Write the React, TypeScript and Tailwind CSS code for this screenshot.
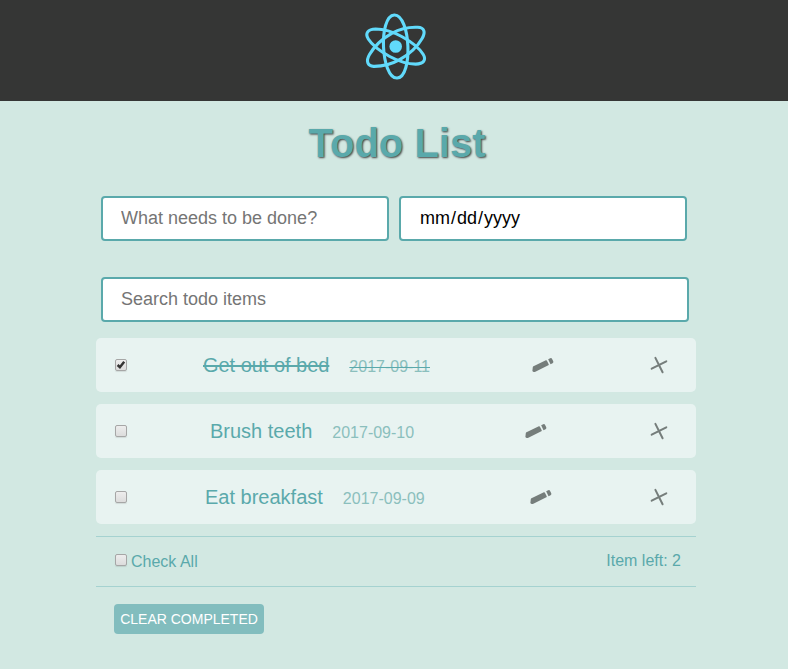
import React from "react";

function ReactLogo() {
  return (
    <svg className="block h-[68px] w-[68px]" viewBox="-33.7 -34.5 68 68" fill="none" stroke="#61dafb" strokeWidth="3.1">
      <circle r="6.3" fill="#61dafb" stroke="none" />
      <path d="M0 -31.6 C8.2 -31.6 12.2 -15 12.2 0 S8.2 31.6 0 31.6 S-12.2 15 -12.2 0 S-8.2 -31.6 0 -31.6Z" transform="rotate(-2.6)" />
      <path d="M22 -19.2 C28.5 -19 30.2 -14.5 26.4 -8 C21.8 0 14 7.5 4 13.2 C-5 18.2 -14 20 -22 19.9 C-28.3 19.6 -30 14.5 -26.2 8 C-21.6 0 -14 -7.5 -4 -13.2 C5 -18 14 -19.6 22 -19.2Z" />
      <path d="M-20 -17.5 C-27.8 -17.4 -31 -13.3 -27.4 -7.5 C-23.6 -1.5 -16 4.5 -6 10 C3 14.8 12 17.6 20 17.6 C27.8 17.5 31 13.5 27.4 7.7 C23.6 1.7 16 -4.5 6 -10 C-3 -14.8 -12 -17.5 -20 -17.5Z" />
    </svg>
  );
}

function Checkbox({ checked = false }: { checked?: boolean }) {
  return (
    <span
      role="checkbox"
      aria-checked={checked}
      className="block h-3 w-3 shrink-0 rounded-[2px] border border-[#a6a6a6] bg-linear-to-b from-[#ededed] to-[#dcdcdc] shadow-[0_1px_1px_rgba(0,0,0,0.1)]"
    >
      {checked && (
        <svg className="block h-[10px] w-[10px]" viewBox="0 0 10 10" fill="none" stroke="#333" strokeWidth="2.5">
          <path d="M1.6 5 L3.9 7.2 L8.2 1.8" />
        </svg>
      )}
    </span>
  );
}

function Pencil() {
  return (
    <svg className="block h-4 w-6 shrink-0" viewBox="0 0 24 16" fill="#757d7b">
      <g transform="translate(11.6 8) rotate(-26)">
        <path d="M-11.8 0.9 L-9.8 -2.3 Q-9.4 -2.8 -8.8 -2.8 H5 Q5.8 -2.8 5.8 -2 V2 Q5.8 2.8 5 2.8 H-9.4 Q-11.8 2.8 -11.8 0.9Z" />
        <path d="M7.5 -2.7 H9.8 Q11.2 -2.7 11.2 -1.3 V1.3 Q11.2 2.7 9.8 2.7 H7.5Z" />
      </g>
    </svg>
  );
}

function Cross() {
  return (
    <svg className="ml-auto block h-[18px] w-[18px] shrink-0" viewBox="0 0 18 18" stroke="#757d7b" strokeWidth="2" strokeLinecap="round">
      <path d="M5.4 1.9 L12.6 16.3 M1.7 12.7 L16.3 5.3" />
    </svg>
  );
}

const todos = [
  { text: "Get out of bed", date: "2017-09-11", done: true, offset: "ml-[76px]", edit: "ml-[101px]" },
  { text: "Brush teeth", date: "2017-09-10", done: false, offset: "ml-[83px]", edit: "ml-[110px]" },
  { text: "Eat breakfast", date: "2017-09-09", done: false, offset: "ml-[78px]", edit: "ml-[104px]" },
];

const field =
  "h-[45px] rounded-[4px] border-2 border-[#5aa9ab] bg-white px-[18px] text-lg leading-[21px] outline-none placeholder:text-[#757575] placeholder:opacity-100";

export default function App() {
  return (
    <div className="min-h-screen bg-[#d2e8e2] font-['Liberation_Sans',Arial,sans-serif] text-[#5aa9ab]">
      <header className="flex h-[101px] justify-center bg-[#353635] pt-[12px] pl-[4px]">
        <ReactLogo />
      </header>
      <main className="ml-24 w-[600px]">
        <h1 className="pt-[19px] pl-[2px] text-center text-[40px] leading-[46px] font-bold [text-shadow:1px_1px_2px_#444]">Todo List</h1>
        <div className="mt-[30px] ml-[5px] flex gap-[10px]">
          <input className={`${field} w-[288px]`} placeholder="What needs to be done?" />
          <div className={`${field} flex w-[288px] items-center pl-[19px] text-black`}>
            <span>mm</span><span className="px-px">/</span><span>dd</span><span className="px-px">/</span><span>yyyy</span>
          </div>
        </div>
        <input className={`${field} mt-9 ml-[5px] block w-[588px]`} placeholder="Search todo items" />
        <ul className="mt-4 flex flex-col gap-3">
          {todos.map((todo) => (
            <li key={todo.date} className="flex h-[54px] items-center rounded-[5px] bg-[#e8f3f1] pr-7 pl-[19px]">
              <Checkbox checked={todo.done} />
              <span className={`${todo.offset} flex items-baseline gap-5 pt-0.5 whitespace-nowrap`}>
                <span className={`text-xl leading-6 ${todo.done ? "line-through decoration-2 tracking-[-0.03px]" : ""}`}>{todo.text}</span>
                <span className={`text-base leading-6 text-[#8bbfbd] decoration-[#5aa9ab] ${todo.done ? "line-through" : ""}`}>{todo.date}</span>
              </span>
              <span className={todo.edit}><Pencil /></span>
              <Cross />
            </li>
          ))}
        </ul>
        <div className="mt-3 flex h-[51px] items-center justify-between border-y border-[#a5d2d0] pr-[15px] pl-[19px]">
          <label className="flex items-center gap-1">
            <span className="mb-[3px]"><Checkbox /></span>
            <span>Check All</span>
          </label>
          <span className="mb-0.5">Item left: 2</span>
        </div>
        <button className="mt-[17px] ml-[18px] block h-[30px] w-[150px] rounded-[4px] bg-[#82bdbe] text-sm whitespace-nowrap text-white">CLEAR COMPLETED</button>
      </main>
    </div>
  );
}
